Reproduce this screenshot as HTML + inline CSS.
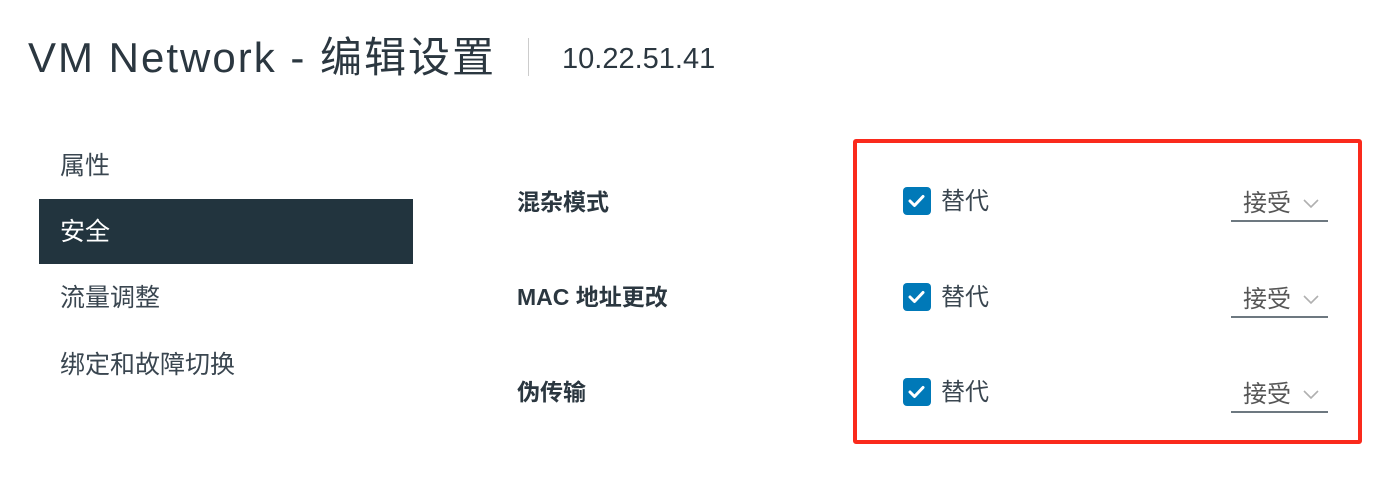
<!DOCTYPE html><html><head><meta charset="utf-8"><style>
body{margin:0;width:1389px;height:481px;background:#fff;font-family:"Liberation Sans","Noto Sans CJK SC",sans-serif;color:#313c45;position:relative;overflow:hidden}
.a{position:absolute;white-space:nowrap}
.t{left:28px;top:32px;font-size:42px;letter-spacing:2px;line-height:52px;color:#2b3740}
.sep{left:528px;top:38px;width:1px;height:38px;background:#ccc}
.ip{left:562px;top:40px;font-size:29px;line-height:38px;color:#2b3740}
.nav{left:60px;font-size:25px;line-height:32px;color:#3a4650}
.sel{left:39px;top:199px;width:374px;height:65px;background:#22343e}
.lb{left:517px;font-size:23px;font-weight:bold;line-height:30px;color:#2b3740}
.red{left:853px;top:139px;width:501px;height:297px;border:4px solid #fa2a1c;border-radius:3px}
.cb{left:903px;width:28px;height:28px;background:#0079b8;border-radius:4px}
.cb svg{position:absolute;left:5px;top:6px}
.rp{left:941px;font-size:24px;line-height:32px;color:#3a4650}
.s{left:1231px;width:97px;height:30px;border-bottom:2px solid #6d7880}
.s span{position:absolute;left:12px;top:-2px;font-size:24px;line-height:32px;color:#565656}
.s svg{position:absolute;left:72px;top:9px}
</style></head><body>
<div class="a t">VM Network - 编辑设置</div>
<div class="a sep"></div>
<div class="a ip">10.22.51.41</div>
<div class="a nav" style="top:150px">属性</div>
<div class="a sel"></div>
<div class="a nav" style="top:216px;color:#fff">安全</div>
<div class="a nav" style="top:282px">流量调整</div>
<div class="a nav" style="top:349px">绑定和故障切换</div>
<div class="a lb" style="top:187px">混杂模式</div>
<div class="a lb" style="top:282px">MAC 地址更改</div>
<div class="a lb" style="top:377px">伪传输</div>
<div class="a red"></div>
<div class="a cb" style="top:187px"><svg width="18" height="16" viewBox="0 0 18 16"><path d="M2 8l4.5 4.5L15 3.5" stroke="#fff" stroke-width="3" fill="none" stroke-linecap="round" stroke-linejoin="round"/></svg></div>
<div class="a cb" style="top:283px"><svg width="18" height="16" viewBox="0 0 18 16"><path d="M2 8l4.5 4.5L15 3.5" stroke="#fff" stroke-width="3" fill="none" stroke-linecap="round" stroke-linejoin="round"/></svg></div>
<div class="a cb" style="top:378px"><svg width="18" height="16" viewBox="0 0 18 16"><path d="M2 8l4.5 4.5L15 3.5" stroke="#fff" stroke-width="3" fill="none" stroke-linecap="round" stroke-linejoin="round"/></svg></div>
<div class="a rp" style="top:186px">替代</div>
<div class="a rp" style="top:282px">替代</div>
<div class="a rp" style="top:377px">替代</div>
<div class="a s" style="top:190px"><span>接受</span><svg width="16" height="10"><path d="M1 1l7 7 7-7" stroke="#b0b0b0" stroke-width="1.6" fill="none"/></svg></div>
<div class="a s" style="top:286px"><span>接受</span><svg width="16" height="10"><path d="M1 1l7 7 7-7" stroke="#b0b0b0" stroke-width="1.6" fill="none"/></svg></div>
<div class="a s" style="top:381px"><span>接受</span><svg width="16" height="10"><path d="M1 1l7 7 7-7" stroke="#b0b0b0" stroke-width="1.6" fill="none"/></svg></div>
</body></html>
